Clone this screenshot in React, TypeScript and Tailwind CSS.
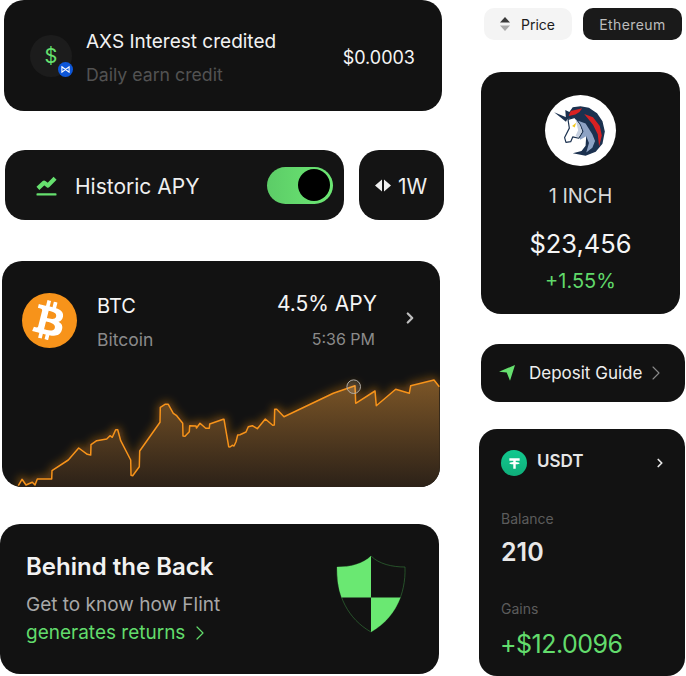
import React from "react";
import { ChevronRight } from "lucide-react";
import { FaBtc } from "react-icons/fa";

const points =
  "18.3,485.7 22,479.3 26,485 32.3,482.3 35,485 37.3,479 51.7,479 52,470.7 68.3,460 78.7,448 87.3,454.3 90.7,455 91,444.7 96.7,440.7 106.7,439 110,435.7 112.3,437.3 115.7,429.7 117.7,429.7 120.7,440.7 130.7,460 131,475.3 132.7,475.7 139.3,466.7 139.7,451 160,422.3 160.3,407.3 165,404.3 168.3,404.3 173.3,413.3 176.7,415.7 182.7,423.3 183,436 185,436.3 189.3,431.7 189.7,425.7 196,426 196.5,428 200,423.3 205.7,428.3 209.3,428.3 209.7,424 223.3,419.3 224,419.3 228.7,446.7 230,447 232.3,445.3 234,446 236,441.7 237.7,435 240,434.7 246,432 248.3,426.7 252.3,425.7 257.3,428.7 265.3,419 272.7,425.3 274.3,425 274.7,409.3 276.7,409.3 284,416.7 333.3,393.3 355,385.7 355.7,403.3 375,391 376.3,405.7 395.7,389.3 409.3,393.3 410.7,385.7 434,380 439.3,386.7";

function PriceChart() {
  return (
    <svg viewBox="2 361 438 126" className="block w-[438px] h-[126px]">
      <defs>
        <linearGradient id="area" x1="0" y1="0" x2="0" y2="1">
          <stop offset="0" stopColor="#7c5627" />
          <stop offset="1" stopColor="#2c2118" />
        </linearGradient>
        <filter id="glow" x="-10%" y="-40%" width="120%" height="180%">
          <feGaussianBlur stdDeviation="4" />
        </filter>
      </defs>
      <polyline points={points} fill="none" stroke="#f7931a" strokeOpacity="0.6" strokeWidth="4" filter="url(#glow)" />
      <polygon points={`18.3,487 ${points} 440,487`} fill="url(#area)" />
      <polyline points={points} fill="none" stroke="#f7931a" strokeWidth="1.5" strokeLinejoin="round" />
      <circle cx="353.7" cy="386.7" r="6.8" fill="#ffffff" fillOpacity="0.1" stroke="#b0aca6" strokeWidth="1" />
    </svg>
  );
}

function UnicornLogo() {
  return (
    <svg viewBox="30 0 210 210" className="block w-[71px] h-[71px] rounded-full bg-white">
      {/* horn */}
      <path d="M57 51 L98 68 L92 79 Z" fill="#1b314f" />
      {/* mane */}
      <path d="M92 72 L90 44 L102 50 L112 36 L135 33 L160 38 L184 54 L200 78 L207 108 L200 144 L180 168 L150 180 L112 172 L138 166 L150 150 L152 120 L136 88 L116 68 Z" fill="#1b314f" />
      {/* red streaks */}
      <path d="M100 62 L106 47 L140 39 L132 50 L120 58 Z" fill="#d82122" />
      <path d="M146 56 L172 66 L192 92 L198 120 L190 152 L186 116 L172 88 Z" fill="#d82122" />
      {/* neck */}
      <path d="M128 76 L150 84 L170 116 L178 136 L170 156 L152 170 L160 142 L152 122 L134 132 Z" fill="#8da2c4" />
      {/* head */}
      <path d="M98 72 L118 66 L134 88 L142 108 L130 128 L112 124 L106 138 L92 140 L88 126 L102 98 Z" fill="#ffffff" stroke="#1b314f" strokeWidth="3.5" strokeLinejoin="round" />
      <path d="M120 70 L134 90 L140 108 L129 125 L120 122 L128 104 Z" fill="#c6d0e0" />
      {/* eye */}
      <path d="M110 92 L122 82 L118 96 Z" fill="#f2c81e" />
    </svg>
  );
}

export default function App() {
  return (
    <div className="flex w-[686px] h-[676px] bg-white font-['Inter',sans-serif] overflow-hidden">
      <div className="flex flex-col w-[444px] shrink-0">
        {/* transaction */}
        <div className="flex items-center justify-between ml-[4px] w-[438px] h-[111px] rounded-[20px] bg-[#121212] pl-[26px] pr-[27px]">
          <div className="flex items-center gap-[14px]">
            <div className="relative flex items-center justify-center w-[42px] h-[42px] rounded-full bg-[#1c1c1c] text-[#66e06f] text-[20px]">
              $
              <div className="absolute right-[-1px] bottom-0 flex items-center justify-center w-[15px] h-[15px] rounded-full bg-[#0d56d8]">
                <svg viewBox="0 0 10 10" className="w-[9px] h-[9px]">
                  <path d="M1 2 L5 5 L9 2 V8 L5 5 L1 8 Z" fill="none" stroke="#ffffff" strokeWidth="1.2" />
                </svg>
              </div>
            </div>
            <div className="flex flex-col gap-[11px] mt-[5px]">
              <div className="text-[19px] leading-[22px] text-[#f2f2f2]">AXS Interest credited</div>
              <div className="text-[17.7px] leading-[22px] text-[#525252]">Daily earn credit</div>
            </div>
          </div>
          <div className="mt-[4px] text-[18px] text-[#f5f5f5]">$0.0003</div>
        </div>

        {/* apy row */}
        <div className="flex gap-[15px] ml-[5px] mt-[39px]">
          <div className="flex items-center justify-between w-[339px] h-[70px] rounded-[20px] bg-[#141414] pl-[31px] pr-[11px]">
            <div className="flex items-center gap-[18px]">
              <svg viewBox="0 0 22 22" className="w-[21px] h-[21px]">
                <path d="M2 14 L8.5 8 L12.5 11 L20 3.5" fill="none" stroke="#66e06f" strokeWidth="4.4" strokeLinejoin="round" />
                <rect x="0.5" y="19" width="21" height="2.6" rx="1" fill="#66e06f" />
              </svg>
              <span className="mt-[4px] text-[21px] text-[#efefef]">Historic APY</span>
            </div>
            <div className="flex items-center justify-end w-[66px] h-[37px] rounded-full bg-gradient-to-r from-[#5ccc67] to-[#6de874] pr-[3px]">
              <div className="w-[32px] h-[32px] rounded-full bg-black" />
            </div>
          </div>
          <div className="flex items-center justify-center gap-[7px] w-[85px] h-[70px] rounded-[20px] bg-[#141414] pr-[1px]">
            <svg viewBox="0 0 16 12" className="w-[16px] h-[13px]">
              <path d="M7 0 V12 L0 6 Z M9 0 V12 L16 6 Z" fill="#f0f0f0" />
            </svg>
            <span className="mt-[4px] text-[21px] text-[#efefef]">1W</span>
          </div>
        </div>

        {/* btc chart */}
        <div className="flex flex-col ml-[2px] mt-[41px] w-[438px] h-[226px] rounded-[20px] bg-[#121212] overflow-hidden">
          <div className="flex h-[100px] pl-[20px] pt-[32px]">
            <div className="flex items-center justify-center w-[55px] h-[55px] rounded-full bg-[#f7931a] text-white text-[39px]">
              <FaBtc className="rotate-[14deg]" />
            </div>
            <div className="flex flex-col gap-[11px] ml-[20px] mt-[1px]">
              <div className="text-[20px] leading-[24px] text-[#f5f5f5]">BTC</div>
              <div className="text-[17.5px] leading-[22px] text-[#8a8a8a]">Bitcoin</div>
            </div>
            <div className="flex flex-col items-end gap-[11px] ml-auto">
              <div className="-mt-[1px] text-[21px] leading-[24px] text-[#f5f5f5]">4.5% APY</div>
              <div className="text-[16px] leading-[22px] text-[#8a8a8a] mr-[2px] mt-[1px]">5:36 PM</div>
            </div>
            <ChevronRight className="w-[18px] h-[18px] ml-[24px] mr-[21px] mt-[16px] text-[#bdbdbd]" strokeWidth={3} />
          </div>
          <PriceChart />
        </div>

        {/* behind the back */}
        <div className="flex items-center justify-between mt-[37px] w-[439px] h-[150px] rounded-[20px] bg-[#121212] pl-[26px] pr-[33px]">
          <div className="flex flex-col">
            <div className="text-[24px] leading-[30px] font-semibold text-[#f2f2f2]">Behind the Back</div>
            <div className="mt-[9px] text-[19px] leading-[28px] text-[#a8a8a8]">Get to know how Flint</div>
            <div className="flex items-center gap-[3px] text-[19px] leading-[28px] text-[#62dc6c]">
              generates returns
              <ChevronRight className="w-[24px] h-[24px]" strokeWidth={1.2} />
            </div>
          </div>
          <svg viewBox="0 0 70 78" className="w-[70px] h-[78px] mb-[10px]">
            <path d="M35 1 C43 9 56 12 69 12 C70 40 58 64 35 77 C12 64 0 40 1 12 C14 12 27 9 35 1 Z" fill="#121212" stroke="#2f6b34" strokeWidth="0.7" />
            <path d="M35 1 V42.5 H5.5 C2 33 1 23 1 12 C14 12 27 9 35 1 Z" fill="#6ae872" />
            <path d="M35 42.5 H64.5 C59 57 49 69 35 77 Z" fill="#6ae872" />
          </svg>
        </div>
      </div>

      <div className="flex flex-col w-[207px] ml-[35px] shrink-0">
        <div className="flex gap-[11px] ml-[5px] mt-[8px] text-[14px]">
          <div className="flex items-center gap-[11px] w-[88px] h-[32px] rounded-[10px] bg-[#f4f4f4] pl-[16px] text-[#1c1c1c]">
            <svg viewBox="0 0 10 14" className="w-[10px] h-[14px]">
              <path d="M5 0 L10 5.5 H0 Z" fill="#3a3a3a" />
              <path d="M5 14 L10 8.5 H0 Z" fill="#a9a9a9" />
            </svg>
            Price
          </div>
          <div className="flex items-center justify-center w-[99px] h-[32px] rounded-[10px] bg-[#1a1a1a] text-[#bdbdbd] tracking-[0.4px]">Ethereum</div>
        </div>

        {/* 1inch */}
        <div className="flex flex-col items-center ml-[2px] mt-[32px] w-[199px] h-[242px] rounded-[20px] bg-[#121212] pt-[23px]">
          <UnicornLogo />
          <div className="mt-[17px] text-[20px] leading-[26px] text-[#d8d8d8]">1 INCH</div>
          <div className="mt-[19px] text-[25.5px] leading-[32px] text-[#f5f5f5]">$23,456</div>
          <div className="mt-[8px] text-[20px] leading-[26px] text-[#60d96a]">+1.55%</div>
        </div>

        {/* deposit guide */}
        <div className="flex items-center ml-[2px] mt-[30px] w-[204px] h-[58px] rounded-[18px] bg-[#121212] pl-[17px]">
          <svg viewBox="0 0 18 18" className="w-[18px] h-[18px]">
            <path d="M17 1 L1 7.7 L8.7 8.5 L12 16.7 Z" fill="#66e06f" />
          </svg>
          <span className="ml-[13px] mt-[2px] text-[17px] text-[#efefef]">Deposit Guide</span>
          <ChevronRight className="w-[24px] h-[24px] ml-[2px] text-[#8a8a8a]" strokeWidth={1.1} />
        </div>

        {/* usdt */}
        <div className="flex flex-col mt-[27px] w-[206px] h-[247px] rounded-[18px] bg-[#121212] pl-[22px] pt-[21px]">
          <div className="flex items-center">
            <div className="flex items-center justify-center w-[26px] h-[26px] rounded-full bg-gradient-to-b from-[#12c98f] to-[#0fae7a]">
              <svg viewBox="0 0 16 16" className="w-[15px] h-[15px]">
                <path d="M2.5 2.5 H13.5 V5 H9.3 V6.4 C11.6 6.5 13.4 7 13.4 7.6 C13.4 8.2 11.6 8.7 9.3 8.8 V13.5 H6.7 V8.8 C4.4 8.7 2.6 8.2 2.6 7.6 C2.6 7 4.4 6.5 6.7 6.4 V5 H2.5 Z" fill="#ffffff" />
              </svg>
            </div>
            <span className="ml-[10px] -mt-[3px] text-[17px] font-semibold text-[#e6e6e6]">USDT</span>
            <ChevronRight className="w-[14px] h-[14px] ml-auto mr-[18px] text-[#e6e6e6]" strokeWidth={3} />
          </div>
          <div className="mt-[34px] text-[14px] leading-[18px] text-[#5c5c5c]">Balance</div>
          <div className="mt-[8px] text-[25px] leading-[32px] font-semibold text-[#e8e8e8]">210</div>
          <div className="mt-[32px] text-[14px] leading-[18px] text-[#5c5c5c]">Gains</div>
          <div className="-ml-[1px] mt-[10px] text-[25px] leading-[32px] tracking-[-0.5px] text-[#62dc6c]">+$12.0096</div>
        </div>
      </div>
    </div>
  );
}
